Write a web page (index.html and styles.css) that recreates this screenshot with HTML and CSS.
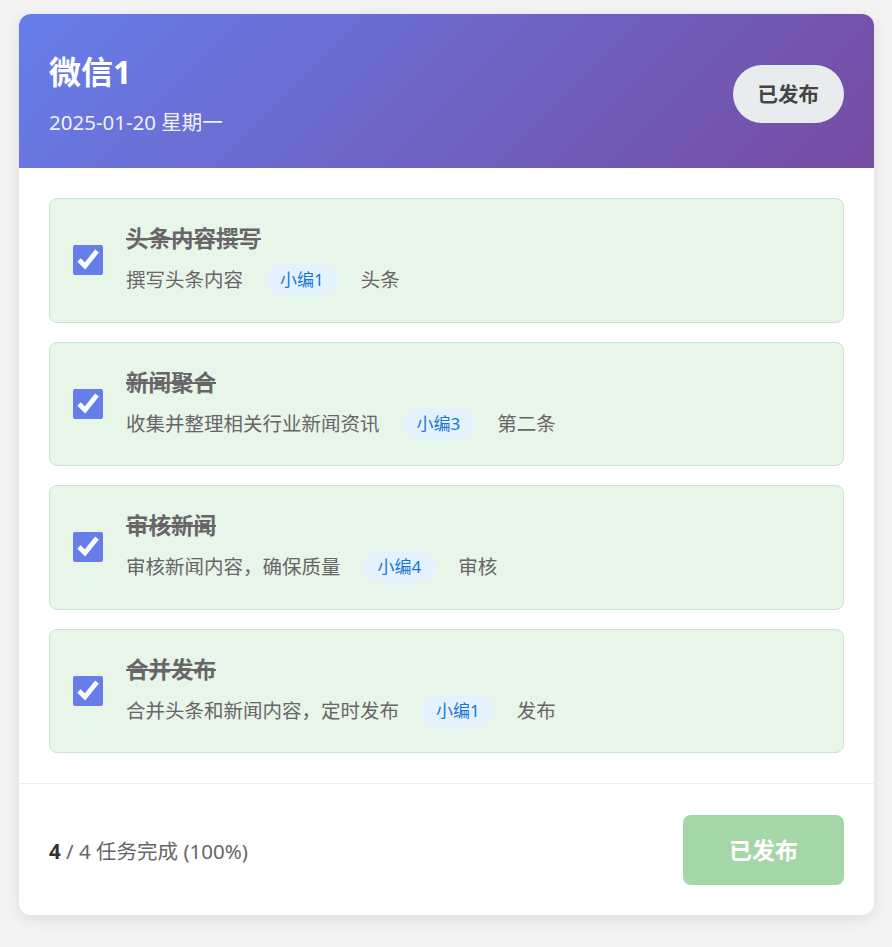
FILE: index.html
```html
<!DOCTYPE html>
<html lang="zh-CN">
<head>
  <meta charset="UTF-8" />
  <title>微信1 - 任务</title>
  <link rel="stylesheet" href="styles.css">
</head>
<body>
  <div class="card">
    <div class="card-header">
      <div class="header-info">
        <h2 class="title">微信1</h2>
        <div class="date">2025-01-20 星期一</div>
      </div>
      <span class="status-badge">已发布</span>
    </div>

    <div class="task-list">
      <div class="task done">
        <input type="checkbox" class="task-check" checked>
        <div class="task-body">
          <div class="task-title">头条内容撰写</div>
          <div class="task-meta">
            <span class="task-desc">撰写头条内容</span>
            <span class="assignee">小编1</span>
            <span class="task-tag">头条</span>
          </div>
        </div>
      </div>
      <div class="task done">
        <input type="checkbox" class="task-check" checked>
        <div class="task-body">
          <div class="task-title">新闻聚合</div>
          <div class="task-meta">
            <span class="task-desc">收集并整理相关行业新闻资讯</span>
            <span class="assignee">小编3</span>
            <span class="task-tag">第二条</span>
          </div>
        </div>
      </div>
      <div class="task done">
        <input type="checkbox" class="task-check" checked>
        <div class="task-body">
          <div class="task-title">审核新闻</div>
          <div class="task-meta">
            <span class="task-desc">审核新闻内容，确保质量</span>
            <span class="assignee">小编4</span>
            <span class="task-tag">审核</span>
          </div>
        </div>
      </div>
      <div class="task done">
        <input type="checkbox" class="task-check" checked>
        <div class="task-body">
          <div class="task-title">合并发布</div>
          <div class="task-meta">
            <span class="task-desc">合并头条和新闻内容，定时发布</span>
            <span class="assignee">小编1</span>
            <span class="task-tag">发布</span>
          </div>
        </div>
      </div>
    </div>

    <div class="card-footer">
      <div class="progress-text"><strong>4</strong> / 4 任务完成 (100%)</div>
      <button class="btn-publish" disabled>已发布</button>
    </div>
  </div>
</body>
</html>
```

FILE: styles.css
```css
body {
  font-family: "Noto Sans", "Noto Sans CJK SC", sans-serif;
  background: #f4f4f4;
  margin: 0;
  padding: 14px 18px 30px 19px;
  color: #333;
}
.card {
  background: white;
  border-radius: 12px;
  overflow: hidden;
  box-shadow: 0 4px 15px rgba(0,0,0,0.1);
}
/* Header */
.card-header {
  background: linear-gradient(135deg, #667eea 0%, #764ba2 100%);
  color: white;
  padding: 38px 30px 32px;
  display: flex;
  justify-content: space-between;
  align-items: center;
}
.title {
  margin: 0 0 16px;
  font-size: 32px;
  line-height: 40px;
  font-weight: bold;
}
.date {
  font-size: 20.5px;
  line-height: 28px;
  opacity: 0.9;
}
.status-badge {
  background: #e9ecef;
  color: #444;
  font-size: 20.5px;
  font-weight: bold;
  line-height: 28px;
  padding: 15px 25px;
  border-radius: 30px;
}
/* Tasks */
.task-list {
  padding: 30px;
  display: flex;
  flex-direction: column;
  gap: 19px;
}
.task {
  display: flex;
  align-items: center;
  gap: 23px;
  padding: 25px 23px 25.5px;
  border-radius: 8px;
  border: 1px solid #c8e6c9;
  background: #e8f5e9;
}
.task-check {
  width: 30px;
  height: 30px;
  margin: 0;
  accent-color: #667eea;
  flex-shrink: 0;
}
.task-title {
  font-size: 22.5px;
  line-height: 30px;
  font-weight: bold;
  color: #666;
  text-decoration: line-through;
}
.task-meta {
  margin-top: 10px;
  height: 32px;
  display: flex;
  align-items: center;
  gap: 22px;
  font-size: 19.5px;
  line-height: 28px;
  color: #666;
}
.assignee {
  background: #e3f2fd;
  color: #1976d2;
  font-size: 17px;
  line-height: 22px;
  padding: 5px 15px;
  border-radius: 16px;
}
/* Footer */
.card-footer {
  border-top: 1px solid #eee;
  padding: 31px 30px 30px;
  display: flex;
  justify-content: space-between;
  align-items: center;
}
.progress-text {
  font-size: 20.5px;
  color: #666;
}
.progress-text strong {
  color: #333;
}
.btn-publish {
  font-family: inherit;
  background: #a5d6a7;
  color: white;
  font-size: 23px;
  font-weight: bold;
  line-height: 30px;
  padding: 20px 46px;
  border: none;
  border-radius: 8px;
}
```
